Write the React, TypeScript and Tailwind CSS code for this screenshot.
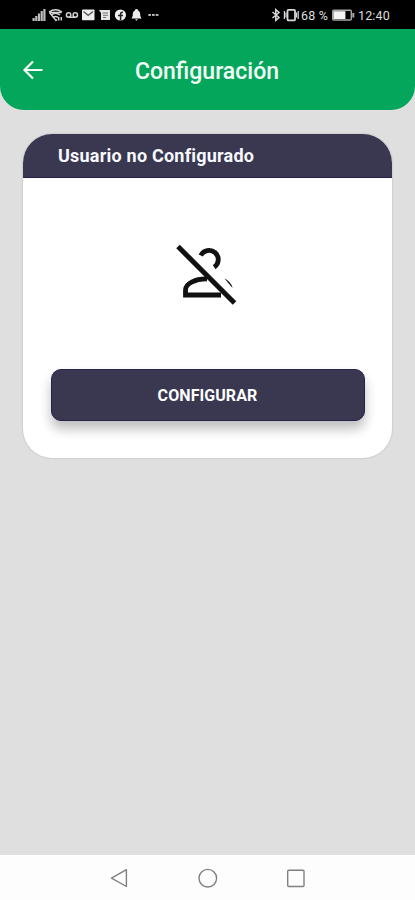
import React from 'react';

function StatusIcons() {
  return (
    <svg className="ml-[31px] block" width="130" height="14" viewBox="31 8 130 14" fill="none">
      <g fill="#bdbdbd">
        <rect x="32.5" y="18" width="2.2" height="3" />
        <rect x="35.2" y="16" width="2.2" height="5" />
        <rect x="37.9" y="13.5" width="2.2" height="7.5" />
        <rect x="40.6" y="11" width="2.2" height="10" />
        <rect x="43.3" y="9" width="2.2" height="12" />
      </g>
      <g stroke="#d4d4d4" strokeWidth="1.5">
        <path d="M49 12 Q55.5 7.5 62 12 M49.5 12.5 H61.5" />
        <path d="M51 15 Q55.5 11.5 60 15" />
        <path d="M53 17.4 Q55.5 15.4 58 17.4" />
        <path d="M49.5 12.5 L56 20.5 L57 19.5" />
        <path d="M58.7 17 V20.5 M61.3 17 V20.5" />
      </g>
      <g stroke="#d0d0d0" strokeWidth="1.5">
        <circle cx="68.6" cy="15" r="2.2" />
        <circle cx="75.3" cy="15" r="2.2" />
        <path d="M68.6 17.2 H75.3" />
      </g>
      <rect x="82" y="9.5" width="12.5" height="10.8" rx="0.8" fill="#ededed" />
      <path d="M83.5 11.5 L88.2 15.3 L93 11.5" stroke="#555" strokeWidth="1.3" />
      <path d="M99 10 H110 V20 H101 V13 Z" fill="#e5e5e5" />
      <path d="M102.5 13 H108 M103 15.3 H108 M103 17.5 H106" stroke="#666" strokeWidth="0.9" />
      <circle cx="120.4" cy="15" r="5.6" fill="#f0f0f0" />
      <path d="M120.6 20.5 V14 Q120.6 12 123 12.2 M118 15.5 H123" stroke="#222" strokeWidth="1.5" />
      <path d="M136.5 9 C138 9 138 10 138 10.4 C140 11.3 140.3 13 140.3 16 L141.5 18.5 H131.5 L132.7 16 C132.7 13 133 11.3 135 10.4 C135 10 135 9 136.5 9 Z M135 19.2 H138 L136.5 20.7 Z" fill="#ededed" />
      <g fill="#bcbcbc">
        <rect x="148.3" y="14" width="2.7" height="1.9" />
        <rect x="152" y="14" width="2.7" height="1.9" />
        <rect x="155.7" y="14" width="2.7" height="1.9" />
      </g>
    </svg>
  );
}

function StatusBar() {
  return (
    <div className="flex h-[29px] items-center bg-black text-[12.5px] leading-[15px] text-[#dedede]">
      <StatusIcons />
      <svg className="ml-[110px] block" width="30" height="14" viewBox="271 8 30 14" fill="none" stroke="#d8d8d8" strokeWidth="1.5">
        <path d="M272.5 12 L279 17.5 L275.8 20.3 V9.7 L279 12.5 L272.5 18" />
        <rect x="287.5" y="9.8" width="7.5" height="10.6" rx="1" strokeWidth="1.8" />
        <path d="M284.4 11 V19 M286 12.5 V17.5 M296.5 12.5 V17.5 M298.2 11 V19" strokeWidth="1.2" />
      </svg>
      <span className="w-[30px] whitespace-nowrap pt-px tracking-[0.2px]">68 %</span>
      <svg className="block" width="24" height="14" viewBox="331 8 24 14">
        <rect x="332.7" y="10.2" width="18.6" height="9.8" rx="1" fill="none" stroke="#a5a5a5" strokeWidth="1.4" />
        <rect x="333.4" y="11.2" width="12" height="7.8" fill="#f4f4f4" />
        <rect x="352.3" y="13" width="2" height="4.5" fill="#aaa" />
      </svg>
      <span className="ml-[3px] whitespace-nowrap pt-px tracking-[0.15px]">12:40</span>
    </div>
  );
}

function UserOffIcon() {
  return (
    <svg className="mr-[4px] block" width="64" height="64" viewBox="174 243 64 64" fill="none" stroke="#111" strokeWidth="4.8">
      <path d="M200.8 255.5 A9.2 9.2 0 1 1 214.2 267.2" />
      <path d="M207 279 C196 278.5 185.5 283.5 185.5 290 V295 H221" />
      <path d="M224.5 278.5 C228.5 280.5 231.8 284 232.5 288 Z" fill="#111" stroke="none" />
      <path d="M178 246.5 L234.5 303" strokeWidth="5" />
    </svg>
  );
}

export default function App() {
  return (
    <div className="flex h-[900px] w-[415px] flex-col bg-[#dfdfdf] font-['Roboto',sans-serif]">
      <div className="bg-[linear-gradient(#000_29px,transparent_29px)]">
        <StatusBar />
        <header className="flex h-[81px] items-center rounded-b-[24px] bg-[#03a65a]">
          <svg className="ml-[22px] block" width="21" height="20" viewBox="0 0 21 20" fill="none" stroke="#f7fff9" strokeWidth="2.2">
            <path d="M20.5 10 H2.5 M11 1.5 L2.5 10 L11 18.5" />
          </svg>
          <h1 className="ml-[92px] pt-[4px] text-[23px] leading-7 font-medium whitespace-nowrap text-[#f4fff8]">Configuración</h1>
        </header>
      </div>

      <main className="flex-1 px-[23px] pt-[24px]">
        <section className="flex h-[324px] w-[369px] flex-col items-center overflow-hidden rounded-[29px] bg-white shadow-[0_0_2px_rgba(0,0,0,0.22)]">
          <div className="flex h-[44px] w-full items-center border-b border-[#24204a] bg-[#393850] pl-[35px]">
            <h2 className="text-[18px] leading-6 font-bold tracking-[0.22px] whitespace-nowrap text-[#f8f8ff]">Usuario no Configurado</h2>
          </div>
          <div className="mt-[65px]">
            <UserOffIcon />
          </div>
          <button className="mt-[62px] h-[52px] w-[314px] rounded-[10px] border border-[#28214e] bg-[#393850] pt-[2px] text-[16px] font-bold tracking-[0.08px] text-white shadow-[0_8px_12px_rgba(0,0,0,0.26)]">
            CONFIGURAR
          </button>
        </section>
      </main>

      <nav className="flex h-[45px] items-center bg-[#fdfdfd]">
        <svg className="ml-[110px] block" width="196" height="22" viewBox="110 867 196 22" fill="none" stroke="#808080" strokeWidth="1.4">
          <path d="M111.5 878.2 L126.4 869.7 V886.5 Z" strokeLinejoin="round" />
          <circle cx="207.8" cy="878.2" r="8.8" />
          <rect x="287.7" y="870.2" width="16.3" height="16.3" rx="1" />
        </svg>
      </nav>
    </div>
  );
}
